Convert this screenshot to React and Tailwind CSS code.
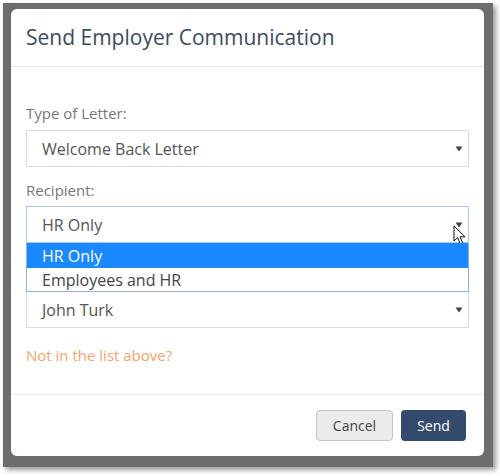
import React from "react";

const Caret = () => (
  <svg width="8" height="6" viewBox="0 0 8 6" className="shrink-0">
    <path d="M0.5 0.5 L7.5 0.5 L4 5.5 Z" fill="#444" />
  </svg>
);

const Cursor = () => (
  <svg
    width="14"
    height="21"
    viewBox="0 0 14 21"
    className="absolute left-[453px] top-[225px]"
  >
    <path
      d="M1 1 L1 16 L4.6 12.6 L7.2 18.8 L9.6 17.8 L7 11.8 L12 11.8 Z"
      fill="#fff"
      stroke="#111"
      strokeWidth="1"
      strokeLinejoin="round"
    />
  </svg>
);

const SelectBox = ({ value, className = "" }) => (
  <div
    className={`h-[37px] flex items-center justify-between pl-[15px] pr-[5px] bg-white border text-[16px] text-[#555] ${className}`}
  >
    <span>{value}</span>
    <Caret />
  </div>
);

export default function App() {
  return (
    <div
      className="w-[500px] h-[476px] bg-white relative"
      style={{ fontFamily: '"Open Sans", "Noto Sans", sans-serif' }}
    >
      <div className="ml-[3px] pt-[3px]">
        <div className="w-[490px] h-[464px] bg-[#6d6d6d] shadow-[3px_3px_5px_rgba(0,0,0,0.4)] pt-[6px] pl-[8px]">
          <div className="w-[473px] h-[447px] bg-white rounded-[6px] flex flex-col">
            {/* header */}
            <div className="h-[58px] shrink-0 flex items-center px-[15px] border-b border-[#e5e5e5]">
              <h2 className="text-[21px] text-[#3c4a60] leading-none">
                Send Employer Communication
              </h2>
            </div>

            {/* body */}
            <div className="flex-1 px-[15px] pt-[36px]">
              <label className="block text-[15px] leading-[20px] text-[#777]">
                Type of Letter:
              </label>
              <SelectBox
                value="Welcome Back Letter"
                className="mt-[7px] border-[#dcdcdc]"
              />

              <label className="block mt-[13px] text-[15px] leading-[20px] text-[#777]">
                Recipient:
              </label>
              <div className="relative mt-[6px]">
                <SelectBox
                  value="HR Only"
                  className="h-[36px] border-[#a8c8ee]"
                />
                <div className="absolute left-0 right-0 top-full z-10 bg-white border border-t-0 border-[#8fb1e0] text-[16px]">
                  <div className="h-[25px] flex items-center pl-[15px] bg-[#1a88ff] text-white">
                    HR Only
                  </div>
                  <div className="h-[23px] flex items-center pl-[15px] text-[#444]">
                    Employees and HR
                  </div>
                </div>
              </div>

              <SelectBox
                value="John Turk"
                className="mt-[48px] border-[#dcdcdc]"
              />

              <div className="mt-[17px] text-[15px] leading-[20px] text-[#f4a46e]">
                Not in the list above?
              </div>
            </div>

            {/* footer */}
            <div className="h-[62px] shrink-0 border-t border-[#ececec] flex items-center justify-end gap-[8px] pr-[18px]">
              <button className="w-[77px] h-[31px] rounded-[4px] bg-[#ebebeb] border border-[#c4c4c4] text-[14px] text-[#444]">
                Cancel
              </button>
              <button className="w-[65px] h-[31px] rounded-[4px] bg-[#344a6d] text-[14px] text-white">
                Send
              </button>
            </div>
          </div>
        </div>
      </div>
      <Cursor />
    </div>
  );
}
